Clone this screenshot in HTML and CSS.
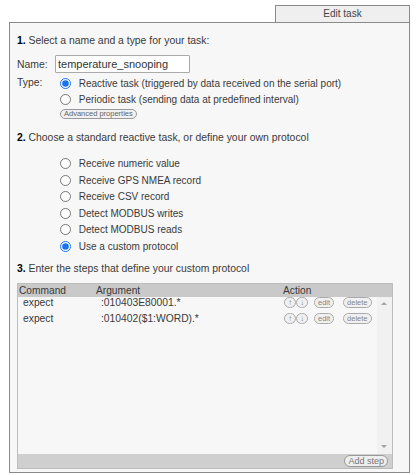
FILE: index.html
```html
<!DOCTYPE html>
<html>
<head>
<meta charset="utf-8">
<link rel="stylesheet" href="styles.css">
</head>
<body>
<div class="wrap">
  <div class="tabs"><div class="tab">Edit task</div></div>
  <div class="panel">
    <div class="step"><b>1.</b> Select a name and a type for your task:</div>
    <div class="row name-row">
      <span class="lbl">Name:</span>
      <input class="name-input" type="text" value="temperature_snooping">
    </div>
    <div class="type-row">
      <span class="lbl">Type:</span>
      <div class="opts">
        <label class="opt"><input type="radio" name="t" checked> Reactive task (triggered by data received on the serial port)</label>
        <label class="opt"><input type="radio" name="t"> Periodic task (sending data at predefined interval)</label>
        <button class="pill adv">Advanced properties</button>
      </div>
    </div>

    <div class="step s2"><b>2.</b> Choose a standard reactive task, or define your own protocol</div>
    <div class="opts list">
      <label class="opt"><input type="radio" name="p"> Receive numeric value</label>
      <label class="opt"><input type="radio" name="p"> Receive GPS NMEA record</label>
      <label class="opt"><input type="radio" name="p"> Receive CSV record</label>
      <label class="opt"><input type="radio" name="p"> Detect MODBUS writes</label>
      <label class="opt"><input type="radio" name="p"> Detect MODBUS reads</label>
      <label class="opt"><input type="radio" name="p" checked> Use a custom protocol</label>
    </div>

    <div class="step s3"><b>3.</b> Enter the steps that define your custom protocol</div>
    <div class="table">
      <div class="thead">
        <span class="c1">Command</span><span class="c2">Argument</span><span class="c3">Action</span>
      </div>
      <div class="tbody">
        <div class="rows">
          <div class="tr">
            <span class="c1">expect</span><span class="c2">:010403E80001.*</span>
            <span class="c3"><button class="pill arr">↑</button><button class="pill arr">↓</button><button class="pill">edit</button><button class="pill del">delete</button></span>
          </div>
          <div class="tr">
            <span class="c1">expect</span><span class="c2">:010402($1:WORD).*</span>
            <span class="c3"><button class="pill arr">↑</button><button class="pill arr">↓</button><button class="pill">edit</button><button class="pill del">delete</button></span>
          </div>
        </div>
        <div class="scroll">
          <span class="tri up"></span>
          <span class="tri down"></span>
        </div>
      </div>
      <div class="tfoot"><button class="pill addstep">Add step</button></div>
    </div>
  </div>
</div>
</body>
</html>
```

FILE: styles.css
```css
html, body {
  margin: 0;
  padding: 0;
  background: #fff;
}
body {
  font-family: "Liberation Sans", Arial, sans-serif;
  font-size: 10px;
  color: #3a3a3a;
}
.wrap {
  padding: 5px 8px 0 9px;
}
.tabs {
  display: flex;
  justify-content: flex-end;
}
.tab {
  width: 133px;
  height: 16px;
  line-height: 16px;
  border: 1px solid #8a8a8a;
  border-bottom: none;
  background: #efefef;
  text-align: center;
  font-size: 10px;
  color: #444;
}
.panel {
  border: 1px solid #8a8a8a;
  background: #f7f7f7;
  padding: 11px 16px 3px 7px;
}
.step {
  line-height: 13px;
  font-size: 10.4px;
}
.step b {
  color: #000;
}
.name-row {
  display: flex;
  align-items: center;
  margin-top: 8px;
}
.lbl {
  width: 38px;
  flex: none;
  font-size: 10.4px;
}
.name-input {
  width: 135px;
  height: 18px;
  box-sizing: border-box;
  border: 1px solid #aaa;
  border-radius: 1px;
  background: #fff;
  font-family: "Liberation Sans", Arial, sans-serif;
  font-size: 11px;
  color: #333;
  padding: 0 2px;
  margin: 0;
}
.type-row {
  display: flex;
  margin-top: 2px;
}
.type-row .lbl {
  line-height: 15px;
}
.opts {
  display: flex;
  flex-direction: column;
  align-items: flex-start;
  margin-left: 5px;
}
.opt {
  display: flex;
  align-items: center;
  height: 16.6px;
  white-space: pre;
  font-size: 10px;
}
.opt input {
  margin: 0 5px 0 0;
  width: 11px;
  height: 11px;
  accent-color: #1a73e8;
}
.pill {
  font-family: "Liberation Sans", Arial, sans-serif;
  font-size: 7.5px;
  color: #666;
  background: #f0f0f0;
  border: 1px solid #999;
  border-radius: 6px;
  padding: 0 3px;
  height: 10px;
  line-height: 8px;
  margin: 0;
}
.adv {
  margin-top: 1px;
}
.s2 {
  margin-top: 12px;
}
.list {
  margin-top: 11px;
  margin-left: 43px;
}
.s3 {
  margin-top: 7px;
}
.table {
  margin-top: 8px;
  border: 1px solid #bdbdbd;
  background: #f7f7f7;
  display: flex;
  flex-direction: column;
}
.thead {
  display: flex;
  background: #c9c9c9;
  height: 13px;
  line-height: 13px;
  font-size: 10.2px;
  padding-left: 1px;
}
.c1 { width: 77px; flex: none; }
.c2 { width: 187px; flex: none; }
.c3 { flex: none; display: flex; align-items: center; }
.tbody {
  display: flex;
  height: 157px;
}
.rows {
  flex: 1;
  padding-top: 0;
}
.tr {
  display: flex;
  height: 16px;
  line-height: 12px;
  font-size: 10.3px;
  padding-left: 5px;
}
.tr .c1 { width: 78px; }
.tr .c2 { width: 183px; }
.tr .c3 { height: 12px; }
.tr .pill {
  height: 11px;
  color: #888;
  border-color: #aaa;
}
.arr {
  width: 12px;
  padding: 0;
  font-size: 8px;
}
.arr + .pill:not(.arr) {
  margin-left: 6px;
}
.del {
  margin-left: 9px;
}
.scroll {
  width: 15px;
  background: #f1f1f1;
  position: relative;
}
.tri {
  position: absolute;
  left: 4px;
  width: 0;
  height: 0;
  border-left: 3px solid transparent;
  border-right: 3px solid transparent;
}
.tri.up {
  top: 5px;
  border-bottom: 3px solid #a3a3a3;
}
.tri.down {
  bottom: 6px;
  border-top: 3px solid #a3a3a3;
}
.tfoot {
  background: #cfcfcf;
  height: 14px;
  display: flex;
  justify-content: flex-end;
  align-items: center;
  padding-right: 4px;
}
.addstep {
  font-size: 9px;
  height: 12px;
  line-height: 10px;
  color: #777;
  background: #eee;
}
```
